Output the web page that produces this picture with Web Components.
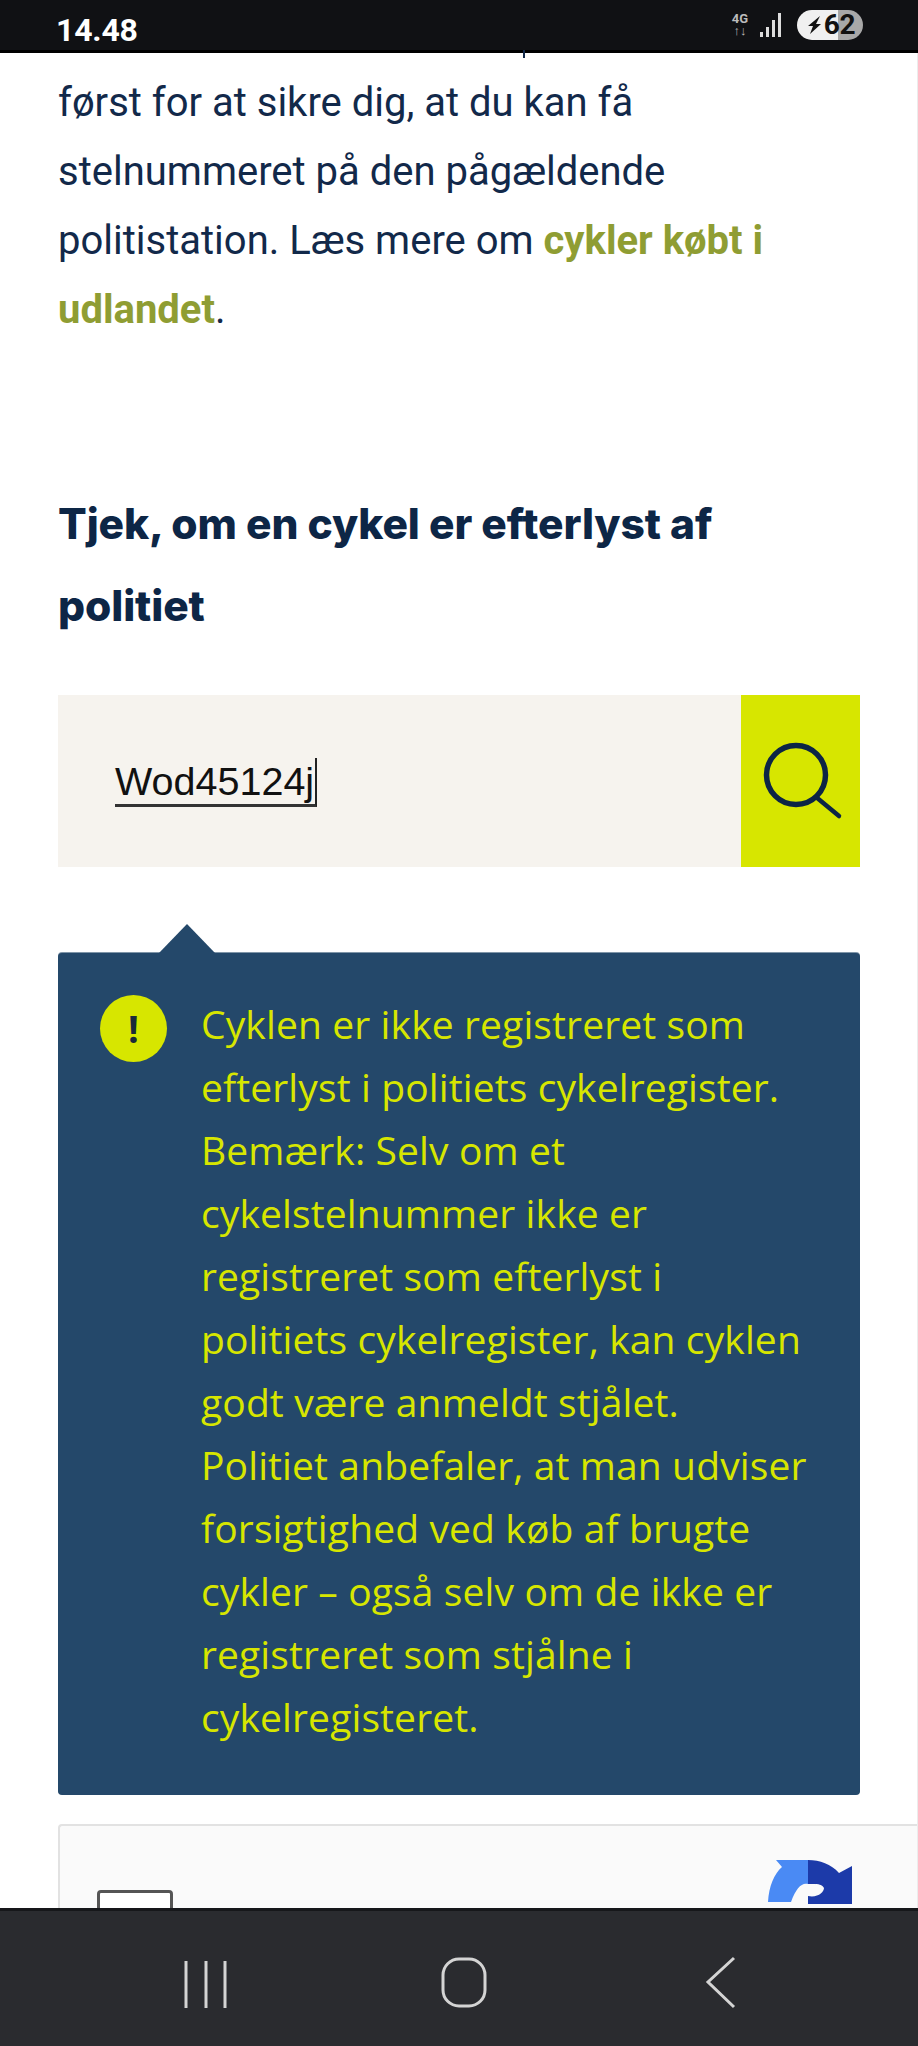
<!DOCTYPE html>
<html lang="da"><head><meta charset="utf-8"><style>
html,body{margin:0;padding:0;background:#fff}
body{width:918px;height:2046px;overflow:hidden;font-family:Roboto,sans-serif}
</style></head><body>
<phone-screen>
<status-bar slot="top" time="14.48" battery="62"></status-bar>
<article-text>først for at sikre dig, at du kan få stelnummeret på den pågældende politistation. Læs mere om <a>cykler købt i</a> <a>udlandet</a>.</article-text>
<section-heading>Tjek, om en cykel er efterlyst af politiet</section-heading>
<search-box value="Wod45124j"></search-box>
<alert-box>Cyklen er ikke registreret som efterlyst i politiets cykelregister. Bemærk: Selv om et cykelstelnummer ikke er registreret som efterlyst i politiets cykelregister, kan cyklen godt være anmeldt stjålet. Politiet anbefaler, at man udviser forsigtighed ved køb af brugte cykler – også selv om de ikke er registreret som stjålne i cykelregisteret.</alert-box>
<captcha-box></captcha-box>
<nav-bar slot="bottom"></nav-bar>
</phone-screen>
<script>
function def(name,html){
  customElements.define(name,class extends HTMLElement{
    constructor(){super();const s=this.attachShadow({mode:'open'});s.innerHTML=html;}
  });
}
def('phone-screen',`<style>
:host{display:flex;flex-direction:column;width:918px;height:2046px;overflow:hidden}
main{flex:1;min-height:0;overflow:hidden;padding:0 57px 0 58px;display:flex;flex-direction:column;border-right:1px solid #ececec;position:relative}
</style><slot name="top"></slot><main><slot></slot></main><slot name="bottom"></slot>`);
customElements.define('status-bar',class extends HTMLElement{
  connectedCallback(){if(this.shadowRoot)return;const s=this.attachShadow({mode:'open'});
  s.innerHTML=`<style>
:host{display:flex;align-items:center;justify-content:space-between;height:50px;padding:0 55px 0 56px;background:#101114;border-bottom:3px solid #000;color:#fff;flex:none;font-family:Roboto,sans-serif;position:relative}
.t{font-size:32px;font-weight:700;letter-spacing:-.2px;margin-top:10px}
.r{display:flex;align-items:center;margin-top:-1px}
.b{width:66px;height:30px;border-radius:15px;background:linear-gradient(90deg,#f0f0f0 0 62%,#a8a8a8 62%);color:#111;font-size:28px;font-weight:700;display:flex;align-items:center;justify-content:flex-end;padding-right:8px;box-sizing:border-box;letter-spacing:-.5px;margin-left:14px}
.b svg{margin-right:1px}
.n{font-size:13px;line-height:12px;font-weight:700;color:#bbb;text-align:center;width:24px;margin-right:8px}
.tick{position:absolute;left:523px;top:50px;width:2px;height:8px;background:#12294a}
</style><span class="t">${this.getAttribute('time')}</span><span class="r">
<span class="n">4G<br>↑↓</span>
<svg width="23" height="26" viewBox="0 0 23 26"><g fill="#ddd"><rect x="0" y="20" width="3" height="5"/><rect x="6" y="15" width="3" height="10"/><rect x="12" y="8" width="3" height="17"/><rect x="18" y="1" width="3" height="24"/></g></svg>
<span class="b"><svg width="17" height="20" viewBox="0 0 17 20"><path d="M14 1 2 11h5l-3 8 11-10h-5z" fill="#111"/></svg>${this.getAttribute('battery')}</span></span><span class="tick"></span>`;}
});
def('article-text',`<style>
:host{display:block;font:400 40px/69px Roboto,sans-serif;color:#12294a;margin-top:15px;height:276px;flex:none}
::slotted(a){font-weight:700;color:#8f9d33}
</style><slot></slot>`);
def('section-heading',`<style>
:host{display:block;font:800 42.5px/82px Inter,"Open Sans",sans-serif;color:#0d2646;margin-top:139px;height:164px;flex:none;max-width:720px;letter-spacing:-.1px}
</style><slot></slot>`);
customElements.define('search-box',class extends HTMLElement{
  connectedCallback(){if(this.shadowRoot)return;const s=this.attachShadow({mode:'open'});
  s.innerHTML=`<style>
:host{display:flex;height:172px;margin-top:48px;background:#f6f3ee;flex:none}
.f{flex:1;display:flex;align-items:center;padding-left:57px}
.v{font:400 39.5px/46px "Liberation Sans",Arial,sans-serif;color:#111;border-bottom:3px solid #333;border-right:2px solid #222;padding-right:1px;margin-top:2px}
button{width:119px;border:0;padding:0;background:#d7e600;display:flex;align-items:center;justify-content:center}
</style><div class="f"><span class="v">${this.getAttribute('value')}</span></div><button aria-label="Søg"><svg width="84" height="84" viewBox="0 0 84 84" fill="none" stroke="#0c2545" stroke-width="5.5" stroke-linecap="round"><circle cx="37" cy="36" r="29.5"/><path d="M57 58 80 77" stroke-width="4.5"/></svg></button>`;}
});
def('alert-box',`<style>
:host{display:block;position:relative;margin-top:86px;background:#24486a;border-radius:4px;color:#d7e600;padding:39px 44px 47px 143px;font:400 39px/63px "Open Sans",sans-serif;letter-spacing:.12px;flex:none;box-shadow:0 -1px 0 #7f95a8}
.arrow{position:absolute;left:101px;top:-29px;width:0;height:0;border-left:28px solid transparent;border-right:28px solid transparent;border-bottom:29px solid #24486a}
.icon{position:absolute;left:42px;top:42px;width:67px;height:67px;border-radius:50%;background:#d7e600;color:#1a2a3a;font:700 38px/66px "Open Sans",sans-serif;text-align:center}
</style><span class="arrow"></span><span class="icon">!</span><slot></slot>`);
def('captcha-box',`<style>
:host{display:block;position:relative;margin-top:29px;height:200px;width:860px;background:#fafafa;border:2px solid #e2e2e2;border-right:0;border-bottom:0;border-radius:4px 0 0 0;box-sizing:border-box;flex:none}
.c{position:absolute;left:37px;top:64px;width:76px;height:76px;border:3px solid #555;border-radius:4px;background:#fff;box-sizing:border-box}
svg{position:absolute;left:708px;top:34px}
</style><span class="c"></span><svg width="84" height="44" viewBox="0 0 84 44"><path d="M8 0H40V24C34 22 28 28 23 42H0C1 26 6 14 14 7z" fill="#4a8af4"/><path d="M40 0C52 0 63 4 71 13L84 6V44H40V36C50 38 56 32 56 28 54 23 46 24 40 24z" fill="#1c3aa9"/></svg>`);
def('nav-bar',`<style>
:host{display:block;position:relative;z-index:2;height:135px;background:#2a2b2f;border-top:3px solid #16171a;flex:none}
svg{position:absolute;top:44px}
</style>
<svg style="left:180px" width="50" height="60" viewBox="0 0 50 60" fill="none" stroke="#d4d4d4" stroke-width="3"><path d="M6 6V53M26 6V53M45 6V53"/></svg>
<svg style="left:436px" width="56" height="60" viewBox="0 0 56 60" fill="none" stroke="#d4d4d4" stroke-width="3"><rect x="7" y="4" width="42" height="47" rx="16"/></svg>
<svg style="left:696px" width="44" height="60" viewBox="0 0 44 60" fill="none" stroke="#d4d4d4" stroke-width="3"><path d="M38 3 12 27 38 52"/></svg>`);
</script>
</body></html>
